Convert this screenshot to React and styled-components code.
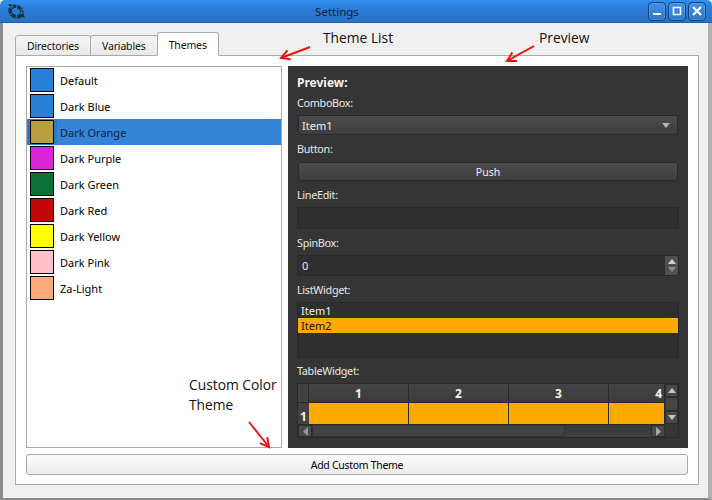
import React from 'react';
import styled, { createGlobalStyle } from 'styled-components';

const GlobalStyle = createGlobalStyle`
  html, body { margin: 0; padding: 0; background: #f0f0f0; }
  body { font-family: "Noto Sans", "Open Sans", sans-serif; font-size: 11px; }
`;

const THEMES = [
  { name: 'Default', color: '#2a7fd9' },
  { name: 'Dark Blue', color: '#2a7fd9' },
  { name: 'Dark Orange', color: '#b89f3f', selected: true },
  { name: 'Dark Purple', color: '#d826d8' },
  { name: 'Dark Green', color: '#0a7035' },
  { name: 'Dark Red', color: '#c40808' },
  { name: 'Dark Yellow', color: '#ffff00' },
  { name: 'Dark Pink', color: '#ffc0cb' },
  { name: 'Za-Light', color: '#ffa87a' },
];

const Logo = () => (
  <svg width="20" height="18" viewBox="0 0 20 18">
    <ellipse cx="10" cy="9.5" rx="6" ry="5" fill="none" stroke="#17354a" strokeWidth="3.6" strokeDasharray="5 1" transform="rotate(30 10 9.5)" />
    <path d="M2 2l6 1-2 4zM13 14l6 2-2-5z" fill="#122c40" />
    <circle cx="15.5" cy="11" r="1.1" fill="#3aa0b0" />
    <circle cx="6" cy="4.5" r="1" fill="#4a8aa0" />
  </svg>
);

const MinIcon = () => (
  <svg width="10" height="10" viewBox="0 0 10 10"><rect x="1" y="7" width="8" height="2" fill="#fff" /></svg>
);
const MaxIcon = () => (
  <svg width="10" height="10" viewBox="0 0 10 10"><path d="M1.5 1.5h7v7h-7z" fill="none" stroke="#fff" strokeWidth="1.6" /></svg>
);
const CloseIcon = () => (
  <svg width="10" height="10" viewBox="0 0 10 10"><path d="M1 1l8 8M9 1l-8 8" stroke="#fff" strokeWidth="2.2" /></svg>
);

const Tri = ({ dir = 'down', color = '#b5b5b5', w = 8, h = 5 }) => {
  const points = {
    down: `0,0 ${w},0 ${w / 2},${h}`,
    up: `0,${h} ${w},${h} ${w / 2},0`,
    left: `${w},0 ${w},${h} 0,${h / 2}`,
    right: `0,0 ${w},${h / 2} 0,${h}`,
  }[dir];
  return (
    <svg width={w} height={h} viewBox={`0 0 ${w} ${h}`}><polygon points={points} fill={color} /></svg>
  );
};

const Arrow = ({ x1, y1, x2, y2, left, top, width, height }) => {
  const a = Math.atan2(y2 - y1, x2 - x1);
  const p = (ang) => `${x2 - 10 * Math.cos(a + ang)},${y2 - 10 * Math.sin(a + ang)}`;
  return (
    <ArrowSvg $left={left} $top={top} width={width} height={height} viewBox={`0 0 ${width} ${height}`}>
      <line x1={x1} y1={y1} x2={x2} y2={y2} stroke="#f01010" strokeWidth="2" />
      <polyline points={`${p(0.5)} ${x2},${y2} ${p(-0.5)}`} fill="none" stroke="#f01010" strokeWidth="2" />
    </ArrowSvg>
  );
};

export default function App() {
  return (
    <Window>
      <GlobalStyle />
      <TitleBar>
        <LogoSlot><Logo /></LogoSlot>
        <Title>Settings</Title>
        <Controls>
          <CtlButton><MinIcon /></CtlButton>
          <CtlButton><MaxIcon /></CtlButton>
          <CtlButton><CloseIcon /></CtlButton>
        </Controls>
      </TitleBar>
      <Body>
        <Tabs>
          <Tab>Directories</Tab>
          <Tab>Variables</Tab>
          <Tab $active>Themes</Tab>
        </Tabs>
        <Pane>
          <Columns>
            <ThemeList>
              {THEMES.map((t) => (
                <ThemeRow key={t.name} $selected={t.selected}>
                  <SwatchCell $selected={t.selected}><Swatch $color={t.color} /></SwatchCell>
                  <ThemeName $selected={t.selected}>{t.name}</ThemeName>
                </ThemeRow>
              ))}
            </ThemeList>
            <Preview>
              <PreviewTitle>Preview:</PreviewTitle>
              <FieldLabel $h={24} $lift={2}>ComboBox:</FieldLabel>
              <Combo>
                <span>Item1</span>
                <Tri />
              </Combo>
              <FieldLabel $h={27}>Button:</FieldLabel>
              <PushButton>Push</PushButton>
              <FieldLabel $h={26}>LineEdit:</FieldLabel>
              <Sunken $h={22} />
              <FieldLabel $h={26}>SpinBox:</FieldLabel>
              <Sunken $h={21}>
                <SpinValue>0</SpinValue>
                <SpinButtons>
                  <Tri dir="up" color="#d0d0d0" />
                  <Tri color="#8a8a8a" />
                </SpinButtons>
              </Sunken>
              <FieldLabel $h={26}>ListWidget:</FieldLabel>
              <ItemList>
                <Item>Item1</Item>
                <Item $selected>Item2</Item>
              </ItemList>
              <FieldLabel $h={25}>TableWidget:</FieldLabel>
              <Table>
                <TableMain>
                  <HeaderRow>
                    <Corner />
                    {[1, 2, 3].map((n) => <ColHead key={n} $w={100}>{n}</ColHead>)}
                    <ColHead $w={56} $right>4</ColHead>
                  </HeaderRow>
                  <DataRow>
                    <RowHead>1</RowHead>
                    {[100, 100, 100, 56].map((w, i) => <DataCell key={i} $w={w} />)}
                  </DataRow>
                  <HScroll>
                    <ScrollBtn $w={14}><Tri dir="left" w={5} h={9} color="#999" /></ScrollBtn>
                    <HThumb />
                    <ScrollBtn $w={14}><Tri dir="right" w={5} h={9} color="#aaa" /></ScrollBtn>
                  </HScroll>
                </TableMain>
                <VScroll>
                  <VBtn><Tri dir="up" color="#c8c8c8" /></VBtn>
                  <VThumb />
                  <VBtn><Tri color="#c8c8c8" /></VBtn>
                  <VCorner />
                </VScroll>
              </Table>
            </Preview>
          </Columns>
          <AddButton>Add Custom Theme</AddButton>
        </Pane>
      </Body>

      <Note $x={323} $y={28}>Theme List</Note>
      <Note $x={539} $y={28}>Preview</Note>
      <Note $x={189} $y={375}>Custom Color<br />Theme</Note>
      <Arrow left={276} top={42} width={38} height={22} x1={34} y1={5} x2={5} y2={16} />
      <Arrow left={502} top={42} width={36} height={24} x1={32} y1={4} x2={5} y2={19} />
      <Arrow left={244} top={418} width={30} height={34} x1={5} y1={4} x2={25} y2={29} />
    </Window>
  );
}

const Window = styled.div`
  position: relative;
  width: 712px;
  height: 500px;
  display: flex;
  flex-direction: column;
  overflow: hidden;
  background: #f0f0f0;
  color: #111;
`;

const TitleBar = styled.div`
  height: 23px;
  flex: none;
  display: flex;
  align-items: center;
  padding: 0 6px 0 6px;
  background: linear-gradient(#3190ee, #2a7bd6 45%, #2a72c6);
  border-radius: 5px 5px 0 0;
  border-bottom: 1px solid #1f5fa5;
  box-sizing: border-box;
`;

const LogoSlot = styled.div`
  display: flex;
  width: 20px;
`;

const Title = styled.div`
  flex: 1;
  text-align: center;
  font-size: 11.5px;
  color: #12202e;
`;

const Controls = styled.div`
  display: flex;
  gap: 2px;
`;

const CtlButton = styled.div`
  width: 18px;
  height: 19px;
  display: flex;
  align-items: center;
  justify-content: center;
  box-sizing: border-box;
  border: 1px solid #14407a;
  border-radius: 4px;
  background: linear-gradient(#3f93e6, #2a78cc);
  box-shadow: inset 0 0 0 1px rgba(120, 180, 240, 0.35);
`;

const Body = styled.div`
  flex: 1;
  min-height: 0;
  display: flex;
  flex-direction: column;
  padding: 9px 9px 13px 12px;
  border-left: 3px solid #8a8a8a;
  border-right: 4px solid #b0b0b0;
  border-bottom: 2px solid #8a8a8a;
  box-sizing: border-box;
`;

const Tabs = styled.div`
  display: flex;
  align-items: flex-end;
  height: 24px;
  flex: none;
  margin-bottom: -1px;
`;

const Tab = styled.div`
  height: ${(p) => (p.$active ? 24 : 21)}px;
  padding: ${(p) => (p.$active ? '2px 11px 0' : '0 11px')};
  display: flex;
  align-items: center;
  box-sizing: border-box;
  border: 1px solid #aaa;
  border-bottom-color: ${(p) => (p.$active ? '#fff' : '#aaa')};
  border-radius: 3px 3px 0 0;
  background: ${(p) => (p.$active ? '#fff' : 'linear-gradient(#f4f4f4, #e8e8e8)')};
  position: relative;
  z-index: ${(p) => (p.$active ? 1 : 0)};
  margin-right: ${(p) => (p.$active ? 0 : -1)}px;
  font-size: 10.5px;
  letter-spacing: -0.15px;
`;

const Pane = styled.div`
  flex: 1;
  min-height: 0;
  display: flex;
  flex-direction: column;
  gap: 6px;
  padding: 10px 10px 9px;
  background: #fff;
  border: 1px solid #aaa;
`;

const Columns = styled.div`
  height: 382px;
  flex: none;
  display: flex;
  gap: 6px;
`;

const ThemeList = styled.div`
  width: 256px;
  box-sizing: border-box;
  border: 1px solid #aaa;
  background: #fff;
`;

const ThemeRow = styled.div`
  height: 26px;
  display: flex;
  align-items: center;
  background: ${(p) => (p.$selected ? '#3584d8' : 'transparent')};
`;

const SwatchCell = styled.div`
  width: 30px;
  height: 100%;
  display: flex;
  align-items: center;
  justify-content: center;
  background: ${(p) => (p.$selected ? '#3077c4' : 'transparent')};
`;

const Swatch = styled.div`
  width: 24px;
  height: 24px;
  box-sizing: border-box;
  border: 1px solid #000;
  background: ${(p) => p.$color};
`;

const ThemeName = styled.span`
  margin-left: 3px;
  font-size: 11px;
  color: ${(p) => (p.$selected ? '#14233a' : '#000')};
`;

const Preview = styled.div`
  width: 400px;
  box-sizing: border-box;
  display: flex;
  flex-direction: column;
  padding: 9px 9px 0;
  background: #353535;
  color: #e8e8e8;
`;

const PreviewTitle = styled.div`
  height: 16px;
  line-height: 16px;
  font-size: 12px;
  font-weight: 700;
  color: #f4f4f4;
`;

const FieldLabel = styled.div`
  height: ${(p) => p.$h}px;
  flex: none;
  display: flex;
  align-items: center;
  box-sizing: border-box;
  padding-bottom: ${(p) => p.$lift || 0}px;
  font-size: 10.8px;
  letter-spacing: -0.3px;
  color: #e8e8e8;
`;

const Combo = styled.div`
  height: 20px;
  margin: 0 1px;
  padding: 0 7px 0 3px;
  display: flex;
  align-items: center;
  justify-content: space-between;
  box-sizing: border-box;
  border: 1px solid #2a2a2a;
  border-radius: 3px;
  background: linear-gradient(#4c4c4c, #3e3e3e);
  font-size: 11px;
  color: #f0f0f0;
`;

const PushButton = styled(Combo)`
  height: 19px;
  justify-content: center;
  padding: 0;
  font-size: 10.5px;
`;

const Sunken = styled.div`
  height: ${(p) => p.$h}px;
  flex: none;
  display: flex;
  justify-content: space-between;
  box-sizing: border-box;
  border: 1px solid #292929;
  border-radius: 2px;
  background: #2f2f2f;
`;

const SpinValue = styled.span`
  align-self: center;
  margin-left: 4px;
  font-size: 11px;
`;

const SpinButtons = styled.div`
  width: 13px;
  display: flex;
  flex-direction: column;
  align-items: center;
  justify-content: center;
  gap: 3px;
  background: #505050;
  border-radius: 0 2px 2px 0;
`;

const ItemList = styled.div`
  height: 56px;
  flex: none;
  box-sizing: border-box;
  border: 1px solid #292929;
  background: #2f2f2f;
`;

const Item = styled.div`
  height: 15px;
  line-height: 15px;
  padding-left: 3px;
  font-size: 11px;
  background: ${(p) => (p.$selected ? '#ffaa00' : 'transparent')};
  color: ${(p) => (p.$selected ? '#1a1400' : '#f0f0f0')};
`;

const Table = styled.div`
  height: 55px;
  flex: none;
  display: flex;
  box-sizing: border-box;
  border: 1px solid #2a2a2a;
  background: #2f2f2f;
`;

const TableMain = styled.div`
  width: 367px;
  flex: none;
  display: flex;
  flex-direction: column;
`;

const HeaderRow = styled.div`
  height: 18px;
  display: flex;
  flex: none;
`;

const Corner = styled.div`
  width: 11px;
  flex: none;
  box-sizing: border-box;
  border-right: 1px solid #2a2a2a;
  background: #414141;
`;

const ColHead = styled.div`
  width: ${(p) => p.$w}px;
  flex: none;
  display: flex;
  align-items: center;
  justify-content: ${(p) => (p.$right ? 'flex-end' : 'center')};
  padding-right: ${(p) => (p.$right ? 2 : 0)}px;
  box-sizing: border-box;
  border-right: 1px solid #2a2a2a;
  background: linear-gradient(#454545, #3c3c3c);
  font-size: 12px;
  font-weight: 700;
  color: #f4f4f4;
`;

const DataRow = styled.div`
  height: 21px;
  display: flex;
  flex: none;
  border-top: 1px solid #2a2a2a;
`;

const RowHead = styled.div`
  width: 11px;
  flex: none;
  display: flex;
  align-items: flex-end;
  justify-content: center;
  background: #414141;
  font-size: 12px;
  line-height: 14px;
  font-weight: 700;
  color: #f4f4f4;
`;

const DataCell = styled.div`
  width: ${(p) => p.$w}px;
  flex: none;
  box-sizing: border-box;
  border-right: 1px solid #2a2a2a;
  background: #ffaa00;
`;

const HScroll = styled.div`
  flex: 1;
  min-height: 0;
  display: flex;
  border-top: 1px solid #2a2a2a;
  background: linear-gradient(#383838, #424242);
`;

const ScrollBtn = styled.div`
  width: ${(p) => p.$w}px;
  flex: none;
  display: flex;
  align-items: center;
  justify-content: center;
  box-sizing: border-box;
  border: 1px solid #2e2e2e;
  background: #4a4a4a;
`;

const HThumb = styled.div`
  flex: 1;
  margin-right: 86px;
  background: #424242;
  border: 1px solid #333;
  box-sizing: border-box;
`;

const VScroll = styled.div`
  flex: 1;
  display: flex;
  flex-direction: column;
`;

const VBtn = styled.div`
  height: 13px;
  flex: none;
  display: flex;
  align-items: center;
  justify-content: center;
  box-sizing: border-box;
  border: 1px solid #2e2e2e;
  background: #4a4a4a;
`;

const VThumb = styled.div`
  height: 14px;
  flex: none;
  box-sizing: border-box;
  border: 1px solid #2e2e2e;
  background: #454545;
`;

const VCorner = styled.div`
  flex: 1;
  background: #353535;
`;

const AddButton = styled.div`
  height: 21px;
  flex: none;
  display: flex;
  align-items: center;
  justify-content: center;
  box-sizing: border-box;
  border: 1px solid #aaa;
  border-radius: 3px;
  background: linear-gradient(#fafafa, #ececec);
  font-size: 10.5px;
  letter-spacing: -0.3px;
  color: #000;
`;

const Note = styled.div`
  position: absolute;
  left: ${(p) => p.$x}px;
  top: ${(p) => p.$y}px;
  font-family: "Open Sans", sans-serif;
  font-size: 13.8px;
  line-height: 20px;
  color: #111;
  white-space: nowrap;
`;

const ArrowSvg = styled.svg`
  position: absolute;
  left: ${(p) => p.$left}px;
  top: ${(p) => p.$top}px;
`;
